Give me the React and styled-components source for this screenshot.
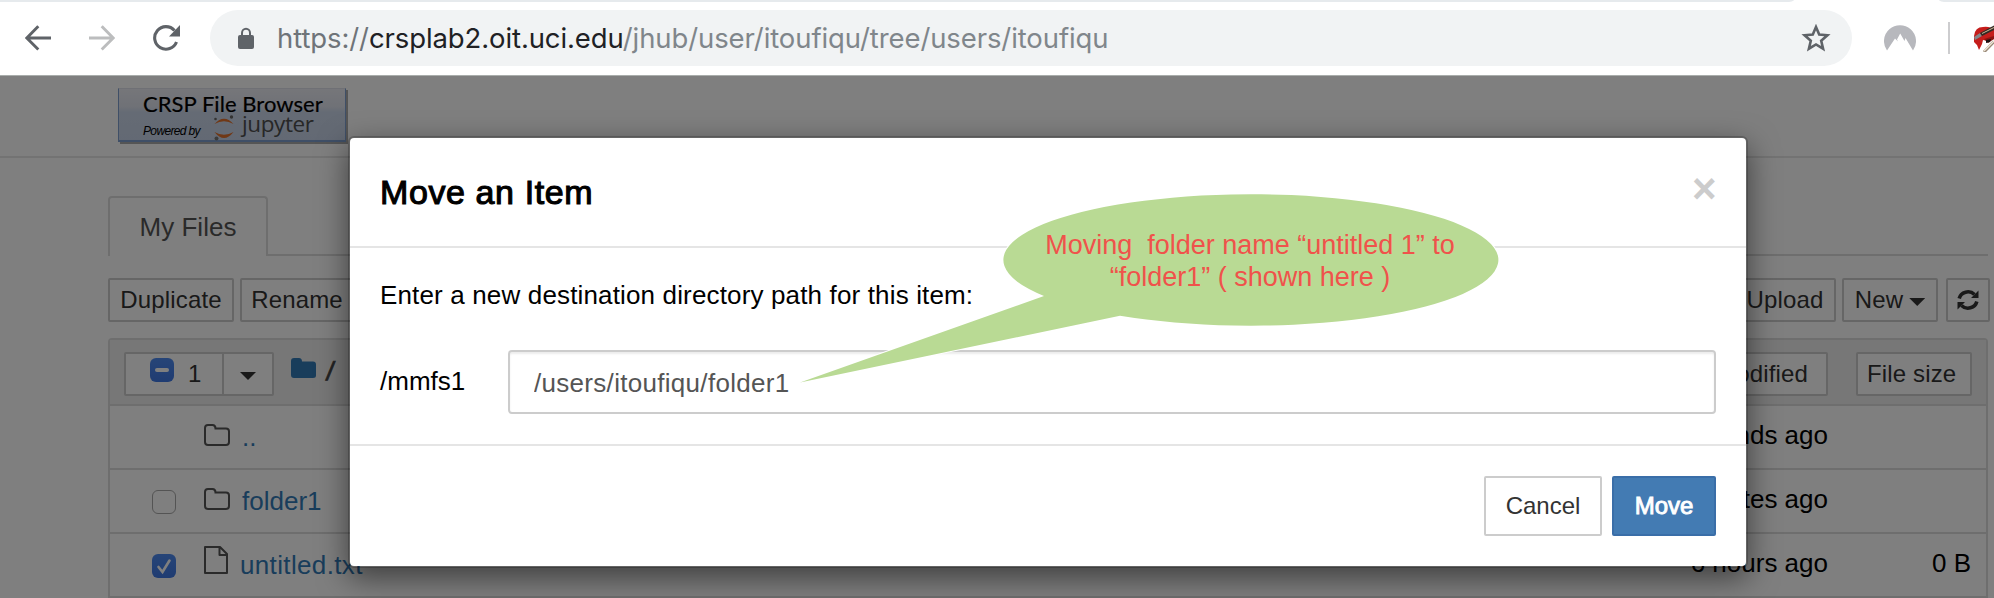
import React from 'react';
import styled, { createGlobalStyle } from 'styled-components';

const sans = '"Liberation Sans", Arial, sans-serif';

const GlobalStyle = createGlobalStyle`
  * { box-sizing: border-box; }
  body {
    margin: 0;
    background: #fff;
    font-family: ${sans};
    overflow: hidden;
  }
`;

const Screen = styled.div`
  position: relative;
  width: 1994px;
  height: 598px;
  overflow: hidden;
  display: flex;
  flex-direction: column;
`;

/* ---------- browser chrome ---------- */

const Browser = styled.header`
  flex: none;
  height: 76px;
  background: #fff;
  border-bottom: 1px solid #a9adab;
`;

const TabStrip = styled.div`
  display: flex;
  justify-content: space-between;
  height: 2px;
`;

const TabEdge = styled.div`
  width: ${(p) => p.$width}px;
  background: #e6eaed;
  border-radius: ${(p) => (p.$right ? '0 0 0 8px / 0 0 0 2px' : '0 0 8px 0 / 0 0 2px 0')};
`;

const NavRow = styled.div`
  display: flex;
  align-items: center;
  height: 72px;
  padding-left: 25px;
`;

const NavIcon = styled.svg`
  flex: none;
  display: block;
  width: ${(p) => p.$w}px;
  height: 28px;
  margin-right: ${(p) => p.$gap ?? 0}px;
  margin-left: ${(p) => p.$before ?? 0}px;
`;

const AddressBar = styled.div`
  flex: none;
  display: flex;
  align-items: center;
  width: 1642px;
  height: 56px;
  padding: 0 21px 0 28px;
  border-radius: 28px;
  background: #f1f3f4;
`;

const Url = styled.div`
  flex: 1;
  margin-left: 23px;
  font-family: Inter, sans-serif;
  font-size: 27.5px;
  letter-spacing: -0.1px;
  white-space: nowrap;
  color: #80868b;
`;

const Scheme = styled.span`
  color: #6f7479;
`;

const Host = styled.span`
  color: #202124;
`;

const ToolbarDivider = styled.div`
  flex: none;
  width: 2px;
  height: 32px;
  margin: 0 24px 0 32px;
  background: #cdcdcf;
`;

/* ---------- file browser page ---------- */

const Page = styled.main`
  position: relative;
  flex: 1;
  min-height: 0;
  background: #fff;
`;

const SiteHeader = styled.div`
  height: 82px;
  padding: 12px 0 0 118px;
  border-bottom: 2px solid #e7e7e7;
`;

const Logo = styled.div`
  width: 228px;
  height: 54px;
  padding: 4px 0 0 24px;
  border: 1px solid #7f9fce;
  border-top-color: #dfe1ea;
  border-bottom-width: 2px;
  background: linear-gradient(#ecedf4 0%, #dfe3ee 35%, #cbd7ea 45%, #c7d3e8 100%);
  box-shadow: 2px 2px 0 #aaa;
`;

const LogoTitle = styled.div`
  font-family: Lato, sans-serif;
  font-size: 22px;
  line-height: 22px;
  letter-spacing: 0.05px;
  white-space: nowrap;
  color: #000;
  -webkit-text-stroke: 0.2px #000;
`;

const LogoFoot = styled.div`
  display: flex;
  height: 24px;
`;

const Powered = styled.span`
  width: 70px;
  padding-top: 9px;
  font-size: 12px;
  line-height: 14px;
  font-style: italic;
  letter-spacing: -0.65px;
  color: #000;
`;

const JupyterWord = styled.span`
  margin: -2px 0 0 7px;
  font-family: "Open Sans", sans-serif;
  font-size: 22.5px;
  line-height: 22px;
  letter-spacing: -0.4px;
  color: #4e4e4e;
`;

const Container = styled.div`
  width: 1882px;
  margin-left: 108px;
  padding-top: 38px;
`;

const Tabs = styled.div`
  display: flex;
  width: 1880px;
  height: 60px;
`;

const Tab = styled.div`
  width: 160px;
  border: 2px solid #ddd;
  border-bottom: 0;
  border-radius: 4px 4px 0 0;
  font-size: 26px;
  line-height: 58px;
  text-align: center;
  color: #555;
`;

const TabLine = styled.div`
  flex: 1;
  border-bottom: 2px solid #ddd;
`;

const Toolbar = styled.div`
  display: flex;
  justify-content: space-between;
  margin: 22px 0 16px;
`;

const Group = styled.div`
  display: flex;
  gap: ${(p) => p.$gap ?? 6}px;
`;

const SmallButton = styled.button`
  display: flex;
  align-items: center;
  justify-content: ${(p) => p.$align ?? 'center'};
  gap: 6px;
  width: ${(p) => p.$width}px;
  height: 44px;
  margin: 0 0 0 ${(p) => p.$before ?? 0}px;
  padding: ${(p) => p.$pad ?? '0'};
  border: 2px solid #ccc;
  border-radius: 2px;
  background: #fff;
  font-family: ${sans};
  font-size: 24px;
  line-height: 40px;
  letter-spacing: 0.15px;
  white-space: nowrap;
  color: #333;
`;

const Caret = styled.span`
  width: 16px;
  height: 8px;
  margin-top: ${(p) => p.$drop ?? 4}px;
  background: #333;
  clip-path: polygon(0 0, 100% 0, 50% 100%);
`;

const List = styled.div`
  width: 1880px;
  border: 2px solid #ddd;
  border-radius: 4px 4px 0 0;
`;

const ListHead = styled.div`
  display: flex;
  justify-content: space-between;
  align-items: flex-start;
  height: 66px;
  padding: 12px 14px 0;
  border-bottom: 2px solid #ddd;
  background: #eee;
`;

const SelectGroup = styled.div`
  display: flex;
  width: 150px;
  height: 44px;
  border: 2px solid #ccc;
  border-radius: 2px;
  background: #fff;
`;

const SelectAll = styled.div`
  display: flex;
  width: 98px;
  padding: 4px 0 0 24px;
  border-right: 2px solid #ccc;
  gap: 14px;
  font-size: 24px;
  line-height: 32px;
  color: #333;
`;

const SelectMenu = styled.div`
  flex: 1;
  display: flex;
  align-items: center;
  justify-content: center;
`;

const Crumbs = styled.div`
  display: flex;
  margin-left: 17px;
  padding-top: 4px;
  gap: 10px;
  font-size: 26px;
  line-height: 30px;
  color: #444;
`;

const Slash = styled.span`
  -webkit-text-stroke: 0.8px #444;
  transform: skewX(-8deg);
`;

const Row = styled.div`
  display: flex;
  align-items: center;
  height: 64px;
  padding: 0 15px 0 42px;
  border-bottom: 2px solid #ddd;
  font-size: 26px;
  line-height: 62px;
  color: #000;
`;

const Check = styled.span`
  display: block;
  flex: none;
  width: 24px;
  height: 24px;
  margin-top: ${(p) => p.$top ?? 2}px;
  border: ${(p) => (p.$kind === 'off' ? '1.5px solid #a8a8a8' : '0')};
  border-radius: 6px;
  background: ${(p) => (p.$kind === 'off' ? '#fff' : 'linear-gradient(#4d8af0, #3f78e4)')};
  visibility: ${(p) => (p.$kind === 'none' ? 'hidden' : 'visible')};
  svg { display: block; }
`;

const ItemIcon = styled.svg`
  flex: none;
  margin: 0 ${(p) => p.$after}px ${(p) => p.$lift}px 28px;
`;

const ItemName = styled.a`
  flex: 1;
  letter-spacing: ${(p) => p.$track ?? 0}px;
  color: #337ab7;
`;

const Modified = styled.span`
  padding-bottom: 4px;
`;

const Size = styled.span`
  width: 143px;
  padding-bottom: 4px;
  text-align: right;
`;

/* ---------- dialog ---------- */

const Backdrop = styled.div`
  position: absolute;
  inset: 0;
  background: rgba(0, 0, 0, 0.5);
`;

const Dialog = styled.section`
  position: absolute;
  left: 348px;
  top: 60px;
  width: 1400px;
  height: 432px;
  border: 2px solid rgba(0, 0, 0, 0.2);
  border-radius: 6px;
  background: #fff;
  background-clip: padding-box;
  box-shadow: 0 10px 30px rgba(0, 0, 0, 0.5);
`;

const DialogHead = styled.div`
  display: flex;
  justify-content: space-between;
  height: 110px;
  padding: 30px 30px 0;
  border-bottom: 2px solid #e5e5e5;
`;

const DialogTitle = styled.h4`
  margin: 0;
  font-size: 34px;
  font-weight: 400;
  line-height: 48px;
  letter-spacing: 0.6px;
  color: #000;
  -webkit-text-stroke: 1.1px #000;
`;

const Close = styled.button`
  width: 24px;
  height: 42px;
  padding: 0;
  border: 0;
  background: none;
  font-family: ${sans};
  font-size: 42px;
  font-weight: 700;
  line-height: 34px;
  color: #ccc;
`;

const DialogBody = styled.div`
  height: 198px;
  padding: 30px 30px 0;
  border-bottom: 2px solid #e5e5e5;
  font-size: 26px;
  color: #000;
`;

const Prompt = styled.p`
  margin: 0 0 37px;
  line-height: 35px;
  letter-spacing: 0.15px;
`;

const Field = styled.label`
  display: flex;
`;

const Prefix = styled.span`
  width: 128px;
  line-height: 62px;
`;

const PathInput = styled.input`
  flex: 1;
  height: 64px;
  padding: 2px 24px 0;
  border: 2px solid #ccc;
  border-radius: 4px;
  box-shadow: inset 0 2px 2px rgba(0, 0, 0, 0.075);
  font-family: ${sans};
  font-size: 26px;
  letter-spacing: 0.3px;
  color: #555;
  outline: none;
`;

const DialogFoot = styled.div`
  display: flex;
  justify-content: flex-end;
  gap: 10px;
  padding: 30px 30px 0;
`;

const DialogButton = styled.button`
  width: ${(p) => (p.$primary ? 104 : 118)}px;
  height: 60px;
  padding: 0;
  border: 2px solid ${(p) => (p.$primary ? '#3a6ea8' : '#ccc')};
  border-radius: 2px;
  background: ${(p) => (p.$primary ? '#437bb3' : '#fff')};
  font-family: ${sans};
  font-size: 24px;
  color: ${(p) => (p.$primary ? '#fff' : '#333')};
  -webkit-text-stroke: ${(p) => (p.$primary ? '0.9px #fff' : '0')};
`;

/* ---------- callout over the dialog ---------- */

const Callout = styled.div`
  position: absolute;
  left: 790px;
  top: 186px;
  width: 716px;
  height: 204px;
`;

const CalloutShape = styled.svg`
  display: block;
`;

const CalloutText = styled.p`
  position: absolute;
  left: 212px;
  top: 43px;
  width: 496px;
  margin: 0;
  font-size: 27px;
  line-height: 32px;
  text-align: center;
  white-space: pre;
  color: #f0524b;
`;

const FolderIcon = () => (
  <ItemIcon $after={12} $lift={4} width="26" height="22" viewBox="0 0 26 22" fill="none" stroke="#555" strokeWidth="2">
    <path d="M1 4Q1 1 4 1H8.5Q11.5 1 11.5 4.6H22Q25 4.600 25 7.600V18Q25 21 22 21H4Q1 21 1 18Z" />
  </ItemIcon>
);

const FileIcon = () => (
  <ItemIcon $after={12} $lift={10} width="24" height="28" viewBox="0 0 24 28" fill="none" stroke="#555" strokeWidth="2" strokeLinejoin="round">
    <path d="M1 1H16L23 8V27H1Z M15.500 1V9H23" />
  </ItemIcon>
);

const files = [
  { name: '..', check: 'none', modified: 'seconds ago', size: '', Icon: FolderIcon },
  { name: 'folder1', check: 'off', modified: '2 minutes ago', size: '', Icon: FolderIcon },
  { name: 'untitled.txt', check: 'on', modified: '6 hours ago', size: '0 B', Icon: FileIcon, track: 0.35 },
];

export default function App() {
  return (
    <Screen>
      <GlobalStyle />
      <Browser>
        <TabStrip>
          <TabEdge $width={1794} />
          <TabEdge $width={55} $right />
        </TabStrip>
        <NavRow>
          <NavIcon $w={26} $gap={38} viewBox="0 0 26 28" fill="none" stroke="#5f6368" strokeWidth="2.900">
            <path d="M26 14H2.500M13.300 2.200L1.800 14L13.300 25.600" />
          </NavIcon>
          <NavIcon $w={26} $gap={38} viewBox="0 0 26 28" fill="none" stroke="#bcbdbe" strokeWidth="2.900">
            <path d="M0 14H23.500M12.700 2.200L24.200 14L12.700 25.600" />
          </NavIcon>
          <NavIcon $w={27} $gap={30} viewBox="0 0 27 28">
            <path d="M23.500 18A11.300 11.300 0 1 1 21.500 6.500" fill="none" stroke="#5f6368" strokeWidth="3.100" />
            <path d="M27 1V12.500H16Z" fill="#5f6368" />
          </NavIcon>
          <AddressBar>
            <NavIcon $w={16} viewBox="0 0 16 28">
              <rect x="0" y="11" width="16" height="14" rx="2" fill="#5f6368" />
              <path d="M4 12V9A4 4.300 0 0 1 12 9V12" fill="none" stroke="#5f6368" strokeWidth="2" />
            </NavIcon>
            <Url>
              <Scheme>https://</Scheme>
              <Host>crsplab2.oit.uci.edu</Host>/jhub/user/itoufiqu/tree/users/itoufiqu
            </Url>
            <NavIcon $w={30} viewBox="0 0 30 28" fill="none" stroke="#5f6368" strokeWidth="2.600">
              <path d="M15 3L18.200 10.600L26.400 11.300L20.200 16.700L22.100 24.700L15 20.400L7.900 24.700L9.800 16.700L3.600 11.300L11.800 10.600Z" />
            </NavIcon>
          </AddressBar>
          <NavIcon $w={32} $before={32} viewBox="0 0 32 28">
            <path d="M3 26.500A16 16 0 1 1 29 26.500L21.500 14L20.500 17L16.200 9.500L13 15.500L14 17.500L11 14.500Z" fill="#b7b8bd" />
          </NavIcon>
          <ToolbarDivider />
          <NavIcon $w={20} viewBox="0 0 20 28">
            <path d="M0 12Q1 3 9 3Q16 2 20 6V15L14 17L9 16L8 20L5 26L3 21L0 18Z" fill="#c51d1b" />
            <path d="M0 13L6 9L8 12L1 16Z" fill="#85868a" />
            <path d="M6 9L20 1.500V6L8 12Z" fill="#332a25" />
            <path d="M8 9.500L20 3.500" stroke="#c9b897" strokeWidth="1" />
            <path d="M10 15L20 12V15L14 19Z" fill="#8a1412" />
            <path d="M12 16L17 15L16 18L12 19Z" fill="#171313" />
            <path d="M10 28L20 17.500" stroke="#9a8a78" strokeWidth="3" />
            <path d="M10 27L20 17" stroke="#efe6d8" strokeWidth="1.500" />
          </NavIcon>
        </NavRow>
      </Browser>

      <Page>
        <SiteHeader>
          <Logo>
            <LogoTitle>CRSP File Browser</LogoTitle>
            <LogoFoot>
              <Powered>Powered by</Powered>
              <svg width="22" height="26" viewBox="0 0 22 26">
                <path d="M1.500 9Q11 -1.500 20.500 9Q11 3.500 1.500 9Z" fill="#e0702c" />
                <path d="M1.500 17Q11 29 20.500 17Q11 22.500 1.500 17Z" fill="#e0702c" />
                <circle cx="2.500" cy="4" r="1.300" fill="#666" />
                <circle cx="18.500" cy="2" r="1.700" fill="#666" />
                <circle cx="3.500" cy="23.500" r="2" fill="#777" />
              </svg>
              <JupyterWord>jupyter</JupyterWord>
            </LogoFoot>
          </Logo>
        </SiteHeader>

        <Container>
          <Tabs>
            <Tab>My Files</Tab>
            <TabLine />
          </Tabs>
          <Toolbar>
            <Group>
              <SmallButton $width={126}>Duplicate</SmallButton>
              <SmallButton $width={114}>Rename</SmallButton>
            </Group>
            <Group>
              <SmallButton $width={102}>Upload</SmallButton>
              <SmallButton $width={96}>
                New
                <Caret />
              </SmallButton>
              <SmallButton $width={44} $before={2}>
                <svg width="22" height="22" viewBox="0 0 22 22" fill="none" stroke="#333" strokeWidth="3.600">
                  <path d="M2.200 9.500A9 8.500 0 0 1 17.500 5.500M19.800 12.500A9 8.500 0 0 1 4.500 16.500" />
                  <path d="M21.500 1.500V9H14ZM0.500 20.500V13H8Z" fill="#333" stroke="none" />
                </svg>
              </SmallButton>
            </Group>
          </Toolbar>

          <List>
            <ListHead>
              <Group $gap={0}>
                <SelectGroup>
                  <SelectAll>
                    <Check $kind="mixed" $top={0}>
                      <svg width="24" height="24" viewBox="0 0 24 24">
                        <rect x="5" y="10" width="14" height="4" rx="2" fill="#fff" />
                      </svg>
                    </Check>
                    <span>1</span>
                  </SelectAll>
                  <SelectMenu>
                    <Caret />
                  </SelectMenu>
                </SelectGroup>
                <Crumbs>
                  <svg width="25" height="24" viewBox="0 0 25 24">
                    <path d="M0 5Q0 2 3 2H8Q11 2 11 5.500H22Q25 5.500 25 8.500V19.500Q25 22 22 22H3Q0 22 0 19Z" fill="#337ab7" />
                  </svg>
                  <Slash>/</Slash>
                </Crumbs>
              </Group>
              <Group $gap={28}>
                <SmallButton $width={176} $align="flex-end" $pad="0 18px 0 0">Last Modified</SmallButton>
                <SmallButton $width={116} $align="flex-start" $pad="0 0 0 9px">File size</SmallButton>
              </Group>
            </ListHead>
            {files.map(({ name, check, modified, size, Icon, track }) => (
              <Row key={name}>
                <Check $kind={check}>
                  {check === 'on' && (
                    <svg width="24" height="24" viewBox="0 0 24 24" fill="none" stroke="#fff" strokeWidth="2.600" strokeLinecap="round">
                      <path d="M6.500 13L10.500 18L17.500 6.500" />
                    </svg>
                  )}
                </Check>
                <Icon />
                <ItemName $track={track}>{name}</ItemName>
                <Modified>{modified}</Modified>
                <Size>{size}</Size>
              </Row>
            ))}
          </List>
        </Container>

        <Backdrop />
        <Dialog>
          <DialogHead>
            <DialogTitle>Move an Item</DialogTitle>
            <Close>×</Close>
          </DialogHead>
          <DialogBody>
            <Prompt>Enter a new destination directory path for this item:</Prompt>
            <Field>
              <Prefix>/mmfs1</Prefix>
              <PathInput defaultValue="/users/itoufiqu/folder1" />
            </Field>
          </DialogBody>
          <DialogFoot>
            <DialogButton>Cancel</DialogButton>
            <DialogButton $primary>Move</DialogButton>
          </DialogFoot>
        </Dialog>
      </Page>

      <Callout>
        <CalloutShape width="716" height="204" viewBox="790 186 716 204">
          <path
            d="M800 382.500L1044 296A247.500 65.700 0 1 1 1120 315.700Z"
            fill="#b9da94"
            stroke="#fff"
            strokeWidth="2"
            paintOrder="stroke"
          />
        </CalloutShape>
        <CalloutText>{'Moving  folder name “untitled 1” to\n“folder1” ( shown here )'}</CalloutText>
      </Callout>
    </Screen>
  );
}
